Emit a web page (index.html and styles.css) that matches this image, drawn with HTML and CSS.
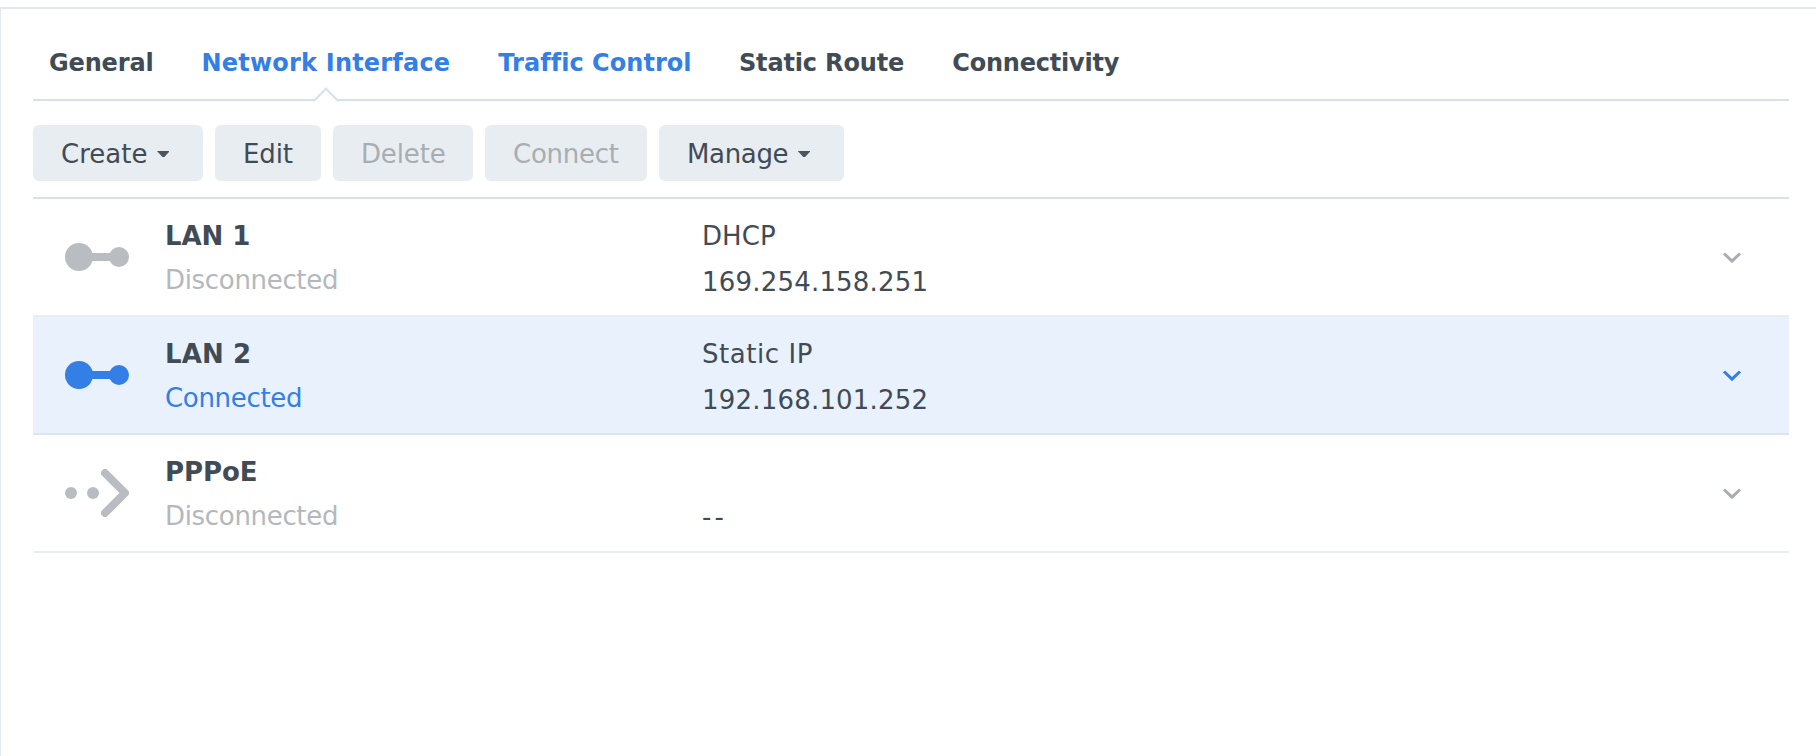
FILE: index.html
```html
<!DOCTYPE html>
<html lang="en">
<head>
<meta charset="utf-8">
<title>Network Interface</title>
<link rel="stylesheet" href="styles.css">
</head>
<body>
<main class="panel">
  <nav class="tabs">
    <a class="tab tab-general">General</a>
    <a class="tab tab-interface accent">Network Interface<svg class="tab-arrow" width="28" height="16" viewBox="0 0 28 16"><path d="M2 14 14 2l12 12v2H2z" fill="#fff"/><path d="M1 14.500h1.200L14 2.700 25.800 14.500H27" fill="none" stroke="#d7e1e9" stroke-width="2"/></svg></a>
    <a class="tab tab-traffic accent">Traffic Control</a>
    <a class="tab tab-route">Static Route</a>
    <a class="tab tab-connectivity">Connectivity</a>
  </nav>
  <div class="toolbar">
    <button class="btn btn-create">Create<span class="caret"></span></button>
    <button class="btn btn-edit">Edit</button>
    <button class="btn btn-delete disabled">Delete</button>
    <button class="btn btn-connect disabled">Connect</button>
    <button class="btn btn-manage">Manage<span class="caret"></span></button>
  </div>
  <section class="list">
    <article class="row">
      <svg class="icon" width="64" height="48" viewBox="0 0 64 48"><g fill="currentColor"><circle cx="14" cy="24" r="14"/><circle cx="54" cy="24" r="10"/><path d="M20 20h30v8H20z"/></g></svg>
      <div class="identity"><div class="name">LAN 1</div><div class="status">Disconnected</div></div>
      <div class="address"><div class="type type-dhcp">DHCP</div><div class="ip">169.254.158.251</div></div>
      <svg class="chevron" width="20" height="14" viewBox="0 0 20 14"><path d="M2 2.500 10 10.200 18 2.500" fill="none" stroke="currentColor" stroke-width="3"/></svg>
    </article>
    <article class="row selected">
      <svg class="icon" width="64" height="48" viewBox="0 0 64 48"><g fill="currentColor"><circle cx="14" cy="24" r="14"/><circle cx="54" cy="24" r="10"/><path d="M20 20h30v8H20z"/></g></svg>
      <div class="identity"><div class="name name-lan2">LAN 2</div><div class="status">Connected</div></div>
      <div class="address"><div class="type type-static">Static IP</div><div class="ip">192.168.101.252</div></div>
      <svg class="chevron" width="20" height="14" viewBox="0 0 20 14"><path d="M2 2.500 10 10.200 18 2.500" fill="none" stroke="currentColor" stroke-width="3"/></svg>
    </article>
    <article class="row">
      <svg class="icon" width="64" height="48" viewBox="0 0 64 48"><circle cx="6" cy="24" r="6" fill="currentColor"/><circle cx="28" cy="24" r="6" fill="currentColor"/><path d="M40 4l20 20-20 20" fill="none" stroke="currentColor" stroke-width="8" stroke-linecap="round" stroke-linejoin="round"/></svg>
      <div class="identity"><div class="name">PPPoE</div><div class="status">Disconnected</div></div>
      <div class="address"><div class="type"></div><div class="ip ip-empty">--</div></div>
      <svg class="chevron" width="20" height="14" viewBox="0 0 20 14"><path d="M2 2.500 10 10.200 18 2.500" fill="none" stroke="currentColor" stroke-width="3"/></svg>
    </article>
  </section>
</main>
</body>
</html>
```
FILE: styles.css
```css
* { box-sizing: border-box; }

body {
  margin: 0;
  padding-top: 7px;
  height: 756px;
  overflow: hidden;
  background: #fff;
  color: #414b55;
  font: 26px/44px "DejaVu Sans", Verdana, sans-serif;
}

.panel {
  height: 749px;
  padding: 0 27px 0 32px;
  border-top: 2px solid #e3e9ef;
  border-left: 1px solid #e1e8f1;
}

/* Tabs */
.tabs {
  display: flex;
  gap: 48px;
  height: 92px;
  padding: 32px 0 0 16px;
  border-bottom: 2px solid #d7e1e9;
}
.tab {
  position: relative;
  flex: none;
  font-size: 24px;
  font-weight: bold;
  white-space: nowrap;
}
.accent { color: #337fe5; }
.tab-general { width: 104.5px; letter-spacing: -0.15px; }
.tab-interface { width: 248.8px; letter-spacing: 0.2px; }
.tab-traffic { width: 192.7px; letter-spacing: 0.04px; }
.tab-route { width: 165.3px; letter-spacing: -0.16px; }
.tab-connectivity { letter-spacing: -0.22px; }
.tab-arrow {
  position: absolute;
  left: 110.5px;
  top: 44.5px;
}

/* Toolbar */
.toolbar {
  display: flex;
  gap: 12px;
  height: 98px;
  padding-top: 24px;
  border-bottom: 2px solid #d7e1e9;
}
.btn {
  display: flex;
  align-items: center;
  height: 56px;
  padding: 2px 0 0 28px;
  border: 0;
  border-radius: 6px;
  background: #e8edf1;
  color: #414b55;
  font: inherit;
}
.btn-create { width: 170px; }
.btn-edit { width: 106px; letter-spacing: -0.15px; }
.btn-delete { width: 140px; letter-spacing: -0.15px; }
.btn-connect { width: 162px; letter-spacing: -0.25px; }
.btn-manage { width: 185px; letter-spacing: -0.35px; }
.disabled { color: #a8adb1; }
.caret {
  width: 12px;
  height: 6px;
  margin-left: 10px;
  background: #4c565f;
  clip-path: polygon(0 0, 100% 0, 100% 10%, 58% 100%, 42% 100%, 0 10%);
}

/* Interface list */
.row {
  display: flex;
  height: 118px;
  padding: 15px 41px 0 32px;
  border-bottom: 2px solid #e8edf1;
}
.row:has(+ .selected) { border-bottom-color: #e7edf2; }
.selected {
  background: #e9f2fc;
  border-bottom-color: #dbe5ef;
}
.icon {
  flex: none;
  margin: 19px 36px 0 0;
  color: #b9bdc2;
}
.identity { width: 537px; }
.name { font-weight: bold; letter-spacing: -0.05px; }
.name-lan2 { letter-spacing: 0.15px; }
.status { color: #b4b8bd; letter-spacing: -0.32px; }
.address { flex: 1; }
.type { height: 44px; }
.type-dhcp { letter-spacing: 0.1px; }
.type-static { letter-spacing: 0.55px; }
.ip { line-height: 48px; letter-spacing: 0.2px; }
.ip-empty { line-height: 46px; letter-spacing: 3px; }
.chevron {
  flex: none;
  margin: 37px 6px 0 0;
  color: #a9adb3;
}
.selected .icon, .selected .status, .selected .chevron { color: #337fe5; }
```
